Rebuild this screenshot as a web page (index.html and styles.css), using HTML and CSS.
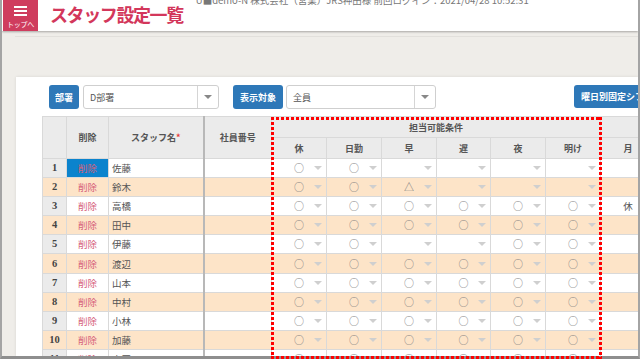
FILE: index.html
```html
<!DOCTYPE html>
<html lang="ja">
<head>
<meta charset="utf-8">
<title>スタッフ設定一覧</title>
<link rel="stylesheet" href="styles.css">
</head>
<body>
<div class="frame">
  <header class="topbar">
    <a class="home">
      <span class="burger"><i></i><i></i><i></i></span>
      <span class="home-label">トップへ</span>
    </a>
    <h1 class="title">スタッフ設定一覧</h1>
    <div class="login">U■demo-N 株式会社（営業）JRS神田様 前回ログイン：2021/04/28 10:52:31</div>
  </header>
  <div class="rule"></div>
  <main class="panel">
    <div class="toolbar">
      <span class="btn btn-dept">部署</span>
      <div class="select select-dept"><span class="val">D部署</span><span class="caret"></span></div>
      <span class="btn btn-target">表示対象</span>
      <div class="select select-target"><span class="val">全員</span><span class="caret"></span></div>
      <span class="btn btn-weekly">曜日別固定シフト</span>
    </div>
    <table class="grid">
      <colgroup>
        <col class="w-num"><col class="w-del"><col class="w-name"><col class="w-emp">
        <col class="w-opt"><col class="w-opt"><col class="w-opt"><col class="w-opt4"><col class="w-opt"><col class="w-opt"><col class="w-opt">
      </colgroup>
      <thead>
        <tr>
          <th rowspan="2" class="num"></th>
          <th rowspan="2">削除</th>
          <th rowspan="2" class="c-name">スタッフ名<span class="req">*</span></th>
          <th rowspan="2">社員番号</th>
          <th colspan="6">担当可能条件</th>
          <th></th>
        </tr>
        <tr>
          <th>休</th><th>日勤</th><th>早</th><th>遅</th><th>夜</th><th>明け</th><th>月</th>
        </tr>
      </thead>
      <tbody>
        <tr>
          <td class="num">1</td><td class="del active">削除</td><td class="c-name name">佐藤</td><td></td>
          <td><div class="sel"><span class="v">○</span><i class="arr"></i></div></td>
          <td><div class="sel"><span class="v">○</span><i class="arr"></i></div></td>
          <td><div class="sel"><span class="v"></span><i class="arr"></i></div></td>
          <td><div class="sel"><span class="v"></span><i class="arr"></i></div></td>
          <td><div class="sel"><span class="v"></span><i class="arr"></i></div></td>
          <td><div class="sel"><span class="v"></span><i class="arr"></i></div></td>
          <td></td>
        </tr>
        <tr>
          <td class="num">2</td><td class="del">削除</td><td class="c-name name">鈴木</td><td></td>
          <td><div class="sel"><span class="v">○</span><i class="arr"></i></div></td>
          <td><div class="sel"><span class="v">○</span><i class="arr"></i></div></td>
          <td><div class="sel"><span class="v">△</span><i class="arr"></i></div></td>
          <td><div class="sel"><span class="v"></span><i class="arr"></i></div></td>
          <td><div class="sel"><span class="v"></span><i class="arr"></i></div></td>
          <td><div class="sel"><span class="v"></span><i class="arr"></i></div></td>
          <td></td>
        </tr>
        <tr>
          <td class="num">3</td><td class="del">削除</td><td class="c-name name">高橋</td><td></td>
          <td><div class="sel"><span class="v">○</span><i class="arr"></i></div></td>
          <td><div class="sel"><span class="v">○</span><i class="arr"></i></div></td>
          <td><div class="sel"><span class="v">○</span><i class="arr"></i></div></td>
          <td><div class="sel"><span class="v">○</span><i class="arr"></i></div></td>
          <td><div class="sel"><span class="v">○</span><i class="arr"></i></div></td>
          <td><div class="sel"><span class="v">○</span><i class="arr"></i></div></td>
          <td>休</td>
        </tr>
        <tr>
          <td class="num">4</td><td class="del">削除</td><td class="c-name name">田中</td><td></td>
          <td><div class="sel"><span class="v">○</span><i class="arr"></i></div></td>
          <td><div class="sel"><span class="v">○</span><i class="arr"></i></div></td>
          <td><div class="sel"><span class="v">○</span><i class="arr"></i></div></td>
          <td><div class="sel"><span class="v">○</span><i class="arr"></i></div></td>
          <td><div class="sel"><span class="v">○</span><i class="arr"></i></div></td>
          <td><div class="sel"><span class="v">○</span><i class="arr"></i></div></td>
          <td></td>
        </tr>
        <tr>
          <td class="num">5</td><td class="del">削除</td><td class="c-name name">伊藤</td><td></td>
          <td><div class="sel"><span class="v">○</span><i class="arr"></i></div></td>
          <td><div class="sel"><span class="v">○</span><i class="arr"></i></div></td>
          <td><div class="sel"><span class="v"></span><i class="arr"></i></div></td>
          <td><div class="sel"><span class="v"></span><i class="arr"></i></div></td>
          <td><div class="sel"><span class="v">○</span><i class="arr"></i></div></td>
          <td><div class="sel"><span class="v">○</span><i class="arr"></i></div></td>
          <td></td>
        </tr>
        <tr>
          <td class="num">6</td><td class="del">削除</td><td class="c-name name">渡辺</td><td></td>
          <td><div class="sel"><span class="v">○</span><i class="arr"></i></div></td>
          <td><div class="sel"><span class="v">○</span><i class="arr"></i></div></td>
          <td><div class="sel"><span class="v">○</span><i class="arr"></i></div></td>
          <td><div class="sel"><span class="v">○</span><i class="arr"></i></div></td>
          <td><div class="sel"><span class="v">○</span><i class="arr"></i></div></td>
          <td><div class="sel"><span class="v">○</span><i class="arr"></i></div></td>
          <td></td>
        </tr>
        <tr>
          <td class="num">7</td><td class="del">削除</td><td class="c-name name">山本</td><td></td>
          <td><div class="sel"><span class="v">○</span><i class="arr"></i></div></td>
          <td><div class="sel"><span class="v">○</span><i class="arr"></i></div></td>
          <td><div class="sel"><span class="v">○</span><i class="arr"></i></div></td>
          <td><div class="sel"><span class="v">○</span><i class="arr"></i></div></td>
          <td><div class="sel"><span class="v">○</span><i class="arr"></i></div></td>
          <td><div class="sel"><span class="v">○</span><i class="arr"></i></div></td>
          <td></td>
        </tr>
        <tr>
          <td class="num">8</td><td class="del">削除</td><td class="c-name name">中村</td><td></td>
          <td><div class="sel"><span class="v">○</span><i class="arr"></i></div></td>
          <td><div class="sel"><span class="v">○</span><i class="arr"></i></div></td>
          <td><div class="sel"><span class="v">○</span><i class="arr"></i></div></td>
          <td><div class="sel"><span class="v">○</span><i class="arr"></i></div></td>
          <td><div class="sel"><span class="v">○</span><i class="arr"></i></div></td>
          <td><div class="sel"><span class="v">○</span><i class="arr"></i></div></td>
          <td></td>
        </tr>
        <tr>
          <td class="num">9</td><td class="del">削除</td><td class="c-name name">小林</td><td></td>
          <td><div class="sel"><span class="v">○</span><i class="arr"></i></div></td>
          <td><div class="sel"><span class="v">○</span><i class="arr"></i></div></td>
          <td><div class="sel"><span class="v">○</span><i class="arr"></i></div></td>
          <td><div class="sel"><span class="v">○</span><i class="arr"></i></div></td>
          <td><div class="sel"><span class="v">○</span><i class="arr"></i></div></td>
          <td><div class="sel"><span class="v">○</span><i class="arr"></i></div></td>
          <td></td>
        </tr>
        <tr>
          <td class="num">10</td><td class="del">削除</td><td class="c-name name">加藤</td><td></td>
          <td><div class="sel"><span class="v">○</span><i class="arr"></i></div></td>
          <td><div class="sel"><span class="v">○</span><i class="arr"></i></div></td>
          <td><div class="sel"><span class="v">○</span><i class="arr"></i></div></td>
          <td><div class="sel"><span class="v">○</span><i class="arr"></i></div></td>
          <td><div class="sel"><span class="v">○</span><i class="arr"></i></div></td>
          <td><div class="sel"><span class="v">○</span><i class="arr"></i></div></td>
          <td></td>
        </tr>
        <tr>
          <td class="num">11</td><td class="del">削除</td><td class="c-name name">吉田</td><td></td>
          <td><div class="sel"><span class="v">○</span><i class="arr"></i></div></td>
          <td><div class="sel"><span class="v">○</span><i class="arr"></i></div></td>
          <td><div class="sel"><span class="v">○</span><i class="arr"></i></div></td>
          <td><div class="sel"><span class="v">○</span><i class="arr"></i></div></td>
          <td><div class="sel"><span class="v">○</span><i class="arr"></i></div></td>
          <td><div class="sel"><span class="v">○</span><i class="arr"></i></div></td>
          <td></td>
        </tr>
      </tbody>
    </table>
  </main>
</div>
<div class="annot" aria-hidden="true"></div>
</body>
</html>
```
FILE: styles.css
```css
* { box-sizing: border-box; }
html, body { margin: 0; padding: 0; }
body {
  width: 640px;
  height: 359px;
  overflow: hidden;
  position: relative;
  background: #fff;
  font-family: "Noto Sans CJK JP", "Noto Sans", sans-serif;
}
.frame {
  width: 640px;
  height: 359px;
  border-left: 2px solid #a4a4a4;
  border-right: 2px solid #a4a4a4;
  border-bottom: 3px solid #8e8e8e;
  background: #efede9;
  display: flex;
  flex-direction: column;
  overflow: hidden;
}
.topbar {
  flex: none;
  height: 31px;
  background: #fff;
  display: flex;
  align-items: flex-start;
  box-shadow: 0 1px 2px rgba(0, 0, 0, 0.3);
  position: relative;
  z-index: 1;
}
.home {
  flex: none;
  margin-left: 1px;
  width: 35px;
  height: 31px;
  background: #cf3d5e;
  color: #fff;
  display: flex;
  flex-direction: column;
  align-items: center;
}
.burger {
  margin-top: 6px;
  width: 13px;
  height: 10px;
  display: flex;
  flex-direction: column;
  justify-content: space-between;
}
.burger i { display: block; height: 2px; background: #fff; }
.home-label {
  font-size: 7px;
  line-height: 1;
  margin-top: 5px;
  white-space: nowrap;
  letter-spacing: -0.3px;
}
.title {
  margin: 2px 0 0 12px;
  font-size: 18px;
  letter-spacing: -1.4px;
  font-weight: 700;
  color: #d3375b;
  line-height: 24px;
  white-space: nowrap;
}
.login {
  margin: -5px 0 0 13px;
  font-size: 9.5px;
  line-height: 11px;
  color: #777;
  white-space: nowrap;
}
.rule {
  flex: none;
  height: 1px;
  margin: 5px 0 0 13px;
  background: #e2e0dc;
}
.panel {
  flex: 1;
  min-height: 0;
  margin: 40px 0 0 14px;
  padding: 8px 0 0 26px;
  background: #fff;
  overflow: hidden;
  box-shadow: 0 0 3px rgba(0, 0, 0, 0.1);
}
.toolbar {
  display: flex;
  height: 24px;
  margin-left: 7px;
}
.btn {
  flex: none;
  background: #2e78b8;
  color: #fff;
  font-weight: 700;
  font-size: 9px;
  border-radius: 3px;
  display: flex;
  align-items: center;
  justify-content: center;
  white-space: nowrap;
}
.btn-dept { width: 30px; }
.btn-target { width: 50px; margin-left: 14px; }
.btn-weekly { margin-left: 138px; padding: 0 7px; height: 23px; justify-content: flex-start; }
.select {
  flex: none;
  border: 1px solid #cfcfcf;
  border-radius: 3px;
  display: flex;
  align-items: center;
  font-size: 9px;
  color: #555;
}
.select-dept { width: 136px; margin-left: 4px; }
.select-target { width: 150px; margin-left: 3px; }
.select .val { flex: 1; padding-left: 6px; }
.select .caret {
  width: 21px;
  align-self: stretch;
  border-left: 1px solid #d5d5d5;
  display: flex;
  align-items: center;
  justify-content: center;
}
.select .caret::after {
  content: "";
  border-left: 4px solid transparent;
  border-right: 4px solid transparent;
  border-top: 4px solid #888;
}
.grid {
  margin-top: 7px;
  border-collapse: collapse;
  table-layout: fixed;
  width: 613px;
  font-size: 9px;
  color: #555;
}
.w-num { width: 24px; }
.w-del { width: 42px; }
.w-name { width: 95px; }
.w-emp { width: 68px; }
.w-opt { width: 55px; }
.w-opt4 { width: 54px; }
.grid th, .grid td {
  border: 1px solid #d9d9d9;
  padding: 0;
  text-align: center;
  vertical-align: middle;
  white-space: nowrap;
  overflow: hidden;
}
.grid thead th {
  background: #ebebeb;
  font-weight: 700;
  color: #555;
  height: 21px;
}
.req { color: #e53a3a; }
.grid tbody td { font-size: 9.5px; line-height: 12px; }
.grid tbody tr { height: 19.1px; }
.grid tbody tr:nth-child(even) td { background: #fde4c8; }
.grid .c-name { border-right: 2px solid #b8b8b8; }
.grid tbody td.num {
  background: #ebebeb;
  font-family: "Liberation Serif", serif;
  font-weight: 700;
  font-size: 10.5px;
  color: #444;
}
.grid td.del { color: #d6607a; }
.grid td.del.active { background: #0b83cd; }
.grid td.name { text-align: left; padding-left: 3px; }
.sel {
  display: grid;
  grid-template-columns: 16px 1fr 16px;
  align-items: center;
  height: 12px;
}
.sel .v { grid-column: 2; font-size: 10px; color: #7e7e7e; line-height: 1; }
.sel .arr {
  grid-column: 3;
  justify-self: center;
  width: 0;
  height: 0;
  border-left: 4px solid transparent;
  border-right: 4px solid transparent;
  border-top: 4px solid #cfcfcf;
}
.annot {
  position: absolute;
  left: 271px;
  top: 117px;
  width: 331px;
  height: 242px;
  background:
    repeating-linear-gradient(90deg, #f00 0 3px, transparent 3px 5px) left top / 100% 3px no-repeat,
    repeating-linear-gradient(90deg, #f00 0 3px, transparent 3px 5px) left bottom / 100% 3px no-repeat,
    repeating-linear-gradient(180deg, #f00 0 3px, transparent 3px 5px) left top / 3px 100% no-repeat,
    repeating-linear-gradient(180deg, #f00 0 3px, transparent 3px 5px) right top / 3px 100% no-repeat;
}
```
